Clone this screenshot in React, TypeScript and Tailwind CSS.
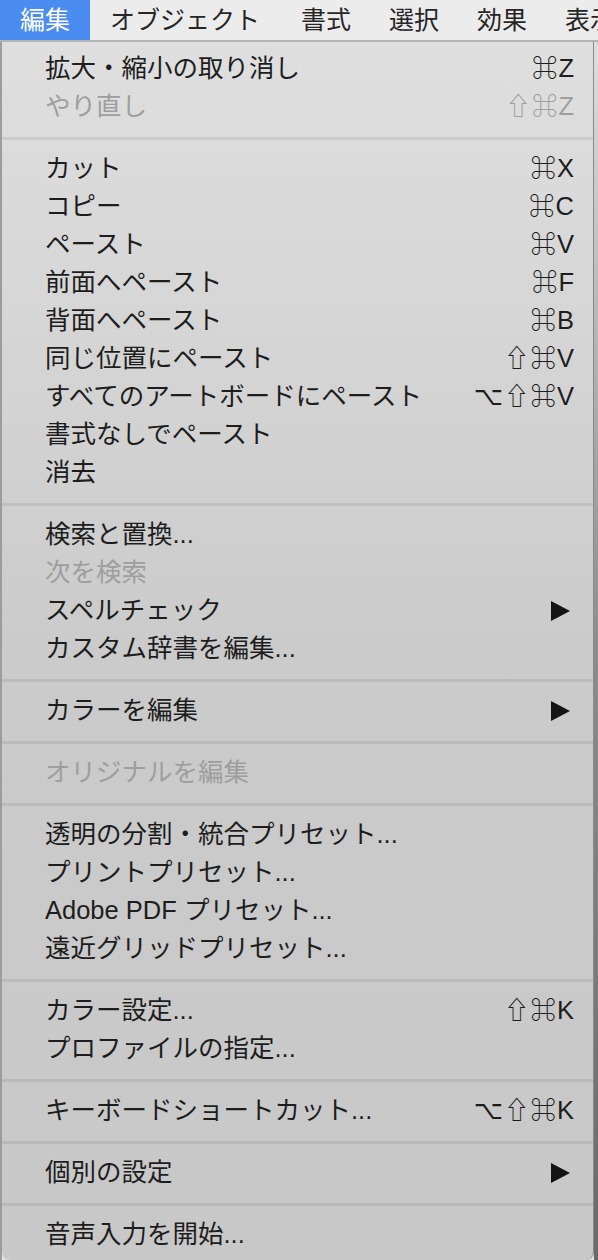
import React from "react";

type Row =
  | { kind: "sep" }
  | { kind: "item"; label: string; keys?: string; disabled?: boolean; sub?: boolean };

const sep: Row = { kind: "sep" };
const it = (label: string, keys?: string, opts: { disabled?: boolean; sub?: boolean } = {}): Row => ({
  kind: "item",
  label,
  keys,
  ...opts,
});

const rows: Row[] = [
  it("拡大・縮小の取り消し", "⌘Z"),
  it("やり直し", "⇧⌘Z", { disabled: true }),
  sep,
  it("カット", "⌘X"),
  it("コピー", "⌘C"),
  it("ペースト", "⌘V"),
  it("前面へペースト", "⌘F"),
  it("背面へペースト", "⌘B"),
  it("同じ位置にペースト", "⇧⌘V"),
  it("すべてのアートボードにペースト", "⌥⇧⌘V"),
  it("書式なしでペースト"),
  it("消去"),
  sep,
  it("検索と置換..."),
  it("次を検索", undefined, { disabled: true }),
  it("スペルチェック", undefined, { sub: true }),
  it("カスタム辞書を編集..."),
  sep,
  it("カラーを編集", undefined, { sub: true }),
  sep,
  it("オリジナルを編集", undefined, { disabled: true }),
  sep,
  it("透明の分割・統合プリセット..."),
  it("プリントプリセット..."),
  it("Adobe PDF プリセット..."),
  it("遠近グリッドプリセット..."),
  sep,
  it("カラー設定...", "⇧⌘K"),
  it("プロファイルの指定..."),
  sep,
  it("キーボードショートカット...", "⌥⇧⌘K"),
  sep,
  it("個別の設定", undefined, { sub: true }),
  sep,
  it("音声入力を開始..."),
];

const menus = [
  { label: "編集", cls: "pl-[20px] pr-[20px] bg-[#4a8cf0] text-white" },
  { label: "オブジェクト", cls: "pl-[20px] pr-[22px] text-[#262626]" },
  { label: "書式", cls: "px-[19px] text-[#262626]" },
  { label: "選択", cls: "px-[19px] text-[#262626]" },
  { label: "効果", cls: "px-[19px] text-[#262626]" },
  { label: "表示", cls: "px-[19px] text-[#262626]" },
];

const font = {
  fontFamily: '"Liberation Sans", "Noto Sans CJK JP", "DejaVu Sans", sans-serif',
};

const App = () => {
  return (
    <div
      className="w-[598px] h-[1260px] flex flex-col overflow-hidden bg-[#e4e4e4] text-[25.5px] text-[#1d1d1d]"
      style={font}
    >
      {/* メニューバー */}
      <div className="h-[42px] flex items-stretch bg-[#ececec] border-b-2 border-[#b4b4b4] shrink-0 whitespace-nowrap text-[25px]">
        {menus.map((m) => (
          <div key={m.label} className={"flex items-center leading-none shrink-0 " + m.cls}>
            {m.label}
          </div>
        ))}
      </div>

      <div className="flex-1 flex">
        {/* 左の背景 */}
        <div className="w-[2px] bg-[#9c9c9c]" />

        {/* メニュー本体 */}
        <div className="flex-1 flex flex-col pt-[8px] rounded-b-[8px] bg-gradient-to-b from-[#dfdfdf] via-[#cbcbcb] to-[#c8c8c8] border-r border-[#8a8a8a]">
          {rows.map((row, i) =>
            row.kind === "sep" ? (
              <div key={i} className="h-[24px] flex items-center">
                <div className="h-[3px] w-full bg-black/[0.075]" />
              </div>
            ) : (
              <div
                key={i}
                className={
                  "h-[38px] flex items-center justify-between pl-[43px] pr-[18px] leading-none whitespace-nowrap " +
                  (row.disabled ? "text-[#9e9e9e]" : "text-[#1d1d1d]")
                }
              >
                <span>{row.label}</span>
                {row.keys && <span className="tracking-[1px]">{row.keys}</span>}
                {row.sub && (
                  <svg width="19" height="20" viewBox="0 0 19 20" className="mr-[5px]">
                    <polygon points="0,0 19,10 0,20" fill="#141414" />
                  </svg>
                )}
              </div>
            )
          )}
        </div>

        {/* 右の背景 */}
        <div className="w-[4px] bg-gradient-to-b from-[#dedede] via-[#8c8c8c] to-[#6a6a6a]" />
      </div>
    </div>
  );
};

export default App;
